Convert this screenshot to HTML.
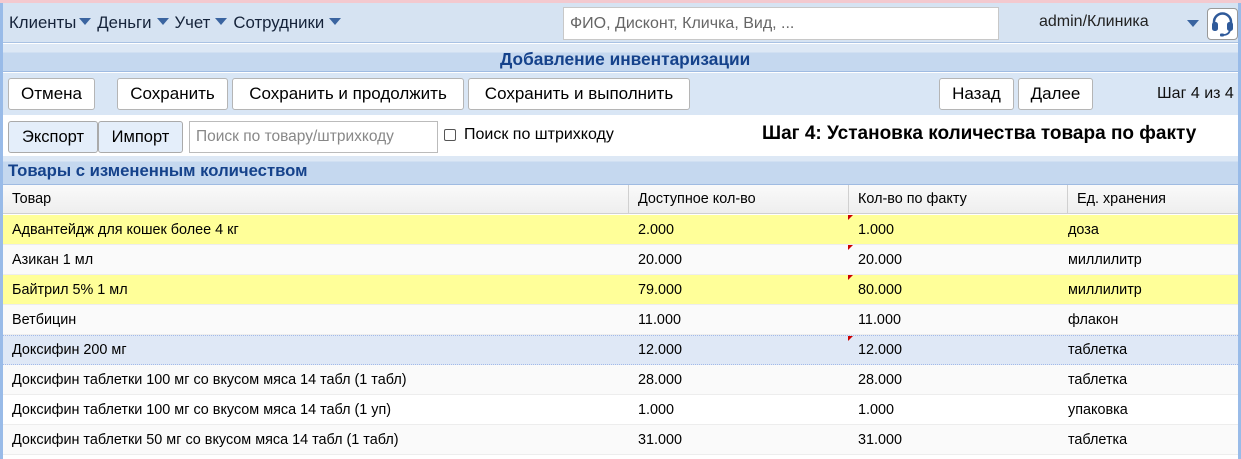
<!DOCTYPE html>
<html><head><meta charset="utf-8"><style>
*{margin:0;padding:0;box-sizing:border-box}
body{width:1241px;height:459px;overflow:hidden;background:#fff;font-family:"Liberation Sans",Arial,sans-serif;font-size:13px;color:#000;position:relative}
.a{position:absolute;white-space:nowrap}
.btn{position:absolute;height:32px;border:1px solid #b5b5b5;border-radius:3px;background:#fff;font-size:17px;line-height:30px;text-align:center;white-space:nowrap}
.tri{display:inline-block;width:0;height:0;border-left:6px solid transparent;border-right:6px solid transparent;border-top:7px solid #3a64a0;margin:0 6px 0 5px;vertical-align:3px}
.row{position:absolute;left:3px;width:1235px;height:30px;border-bottom:1px solid #ededed;font-size:14.4px;line-height:31px;white-space:nowrap}
.row span{position:absolute}
.c1{left:9px}.c2{left:635px}.c3{left:855px}.c4{left:1065px}
.mk{position:absolute;left:845px;top:0;width:0;height:0;border-top:5px solid #c00;border-right:5px solid transparent}
</style></head><body>
<div class="a" style="left:0;top:0;width:1241px;height:3px;background:#f3c9cf"></div>
<div class="a" style="left:0;top:3px;width:3px;height:456px;background:#99bbe8"></div>
<div class="a" style="right:0;top:3px;width:3px;height:456px;background:#99bbe8"></div>
<div class="a" style="left:3px;top:3px;width:1235px;height:40px;background:#d6e3f2;border-bottom:1px solid #a9c2e3"></div>
<div class="a" style="left:9px;top:13px;font-size:16.8px;color:#15233a">Клиенты<span class="tri" style="margin-left:3px"></span>Деньги<span class="tri"></span>Учет<span class="tri"></span>Сотрудники<span class="tri"></span></div>
<div class="a" style="left:563px;top:7px;width:436px;height:33px;background:#fff;border:1px solid #c8c8c8;font-size:16px;color:#666;padding-left:6px;line-height:31px">ФИО, Дисконт, Кличка, Вид, ...</div>
<div class="a" style="left:1039px;top:13px;font-size:16px;color:#222">admin/Клиника</div>
<div class="a" style="left:1187px;top:20px;border-left:6px solid transparent;border-right:6px solid transparent;border-top:7px solid #3a64a0"></div>
<div class="a" style="left:1207px;top:8px;width:31px;height:32px;background:#fff;border:1px solid #999;border-radius:4px">
<svg width="29" height="30" viewBox="0 0 29 30"><path d="M6 16 V13 A8.5 8.5 0 0 1 23 13 V16" fill="none" stroke="#2f5a9a" stroke-width="2.5"/><rect x="4" y="13" width="6" height="9" rx="2.5" fill="#2f5a9a"/><rect x="19" y="13" width="6" height="9" rx="2.5" fill="#2f5a9a"/><path d="M22 21 Q21 26 15 26" fill="none" stroke="#2f5a9a" stroke-width="1.8"/><rect x="12" y="24.5" width="4" height="3" rx="1" fill="#2f5a9a"/></svg></div>
<div class="a" style="left:3px;top:44px;width:1235px;height:28px;background:linear-gradient(#dde8f5 0,#dde8f5 8px,#c5d8ef 9px,#c5d8ef);border-bottom:1px solid #9fbbe2"></div>
<div class="a" style="left:500px;top:47px;font-weight:bold;font-size:17.3px;color:#15428b;line-height:24px">Добавление инвентаризации</div>
<div class="a" style="left:3px;top:73px;width:1235px;height:42px;background:#d9e6f5"></div>
<div class="btn" style="left:8px;top:78px;width:87px">Отмена</div>
<div class="btn" style="left:117px;top:78px;width:111px">Сохранить</div>
<div class="btn" style="left:232px;top:78px;width:232px">Сохранить и продолжить</div>
<div class="btn" style="left:468px;top:78px;width:222px">Сохранить и выполнить</div>
<div class="btn" style="left:939px;top:78px;width:75px">Назад</div>
<div class="btn" style="left:1018px;top:78px;width:75px">Далее</div>
<div class="a" style="left:1157px;top:85px;font-size:16px;color:#111">Шаг 4 из 4</div>
<div class="a" style="left:3px;top:115px;width:1235px;height:41px;background:#fff"></div>
<div class="btn" style="left:8px;top:121px;width:90px;background:#e4eefa;font-size:16.5px;border-color:#aaa">Экспорт</div>
<div class="btn" style="left:98px;top:121px;width:85px;background:#e4eefa;font-size:16.5px;border-color:#aaa">Импорт</div>
<div class="a" style="left:189px;top:121px;width:249px;height:32px;border:1px solid #bbb;font-size:15.5px;color:#888;padding-left:6px;line-height:30px;overflow:hidden">Поиск по товару/штрихкоду</div>
<div class="a" style="left:444px;top:129px;width:12px;height:12px;border:1px solid #555;border-radius:2px;background:#fff"></div>
<div class="a" style="left:464px;top:126px;font-size:16px">Поиск по штрихкоду</div>
<div class="a" style="left:762px;top:123px;font-size:19px;font-weight:bold">Шаг 4: Установка количества товара по факту</div>
<div class="a" style="left:3px;top:156px;width:1235px;height:29px;background:linear-gradient(#dde8f5 0,#dde8f5 5px,#c5d8ef 6px,#c5d8ef);border-bottom:1px solid #9fbbe2"></div>
<div class="a" style="left:8px;top:161px;font-size:16.7px;font-weight:bold;color:#15428b">Товары с измененным количеством</div>
<div class="a" style="left:3px;top:185px;width:1235px;height:29px;background:linear-gradient(#fafafa,#eeeeee);border-bottom:1px solid #d0d0d0;font-size:14.4px;line-height:28px">
<span class="a" style="left:9px">Товар</span>
<span class="a" style="left:625px;top:0;height:28px;border-left:1px solid #d0d0d0"></span>
<span class="a" style="left:635px">Доступное кол-во</span>
<span class="a" style="left:845px;top:0;height:28px;border-left:1px solid #d0d0d0"></span>
<span class="a" style="left:855px">Кол-во по факту</span>
<span class="a" style="left:1064px;top:0;height:28px;border-left:1px solid #d0d0d0"></span>
<span class="a" style="left:1074px">Ед. хранения</span>
</div>
<div class="row" style="top:215px;background:#ffff99"><span class="c1">Адвантейдж для кошек более 4 кг</span><span class="c2">2.000</span><i class="mk"></i><span class="c3">1.000</span><span class="c4">доза</span></div>
<div class="row" style="top:245px;background:#fafafa"><span class="c1">Азикан 1 мл</span><span class="c2">20.000</span><i class="mk"></i><span class="c3">20.000</span><span class="c4">миллилитр</span></div>
<div class="row" style="top:275px;background:#ffff99"><span class="c1">Байтрил 5% 1 мл</span><span class="c2">79.000</span><i class="mk"></i><span class="c3">80.000</span><span class="c4">миллилитр</span></div>
<div class="row" style="top:305px;background:#fafafa"><span class="c1">Ветбицин</span><span class="c2">11.000</span><span class="c3">11.000</span><span class="c4">флакон</span></div>
<div class="row" style="top:335px;background:#dfe8f6;border-top:1px dotted #a3bae9;border-bottom:1px dotted #a3bae9;line-height:29px"><span class="c1">Доксифин 200 мг</span><span class="c2">12.000</span><i class="mk"></i><span class="c3">12.000</span><span class="c4">таблетка</span></div>
<div class="row" style="top:365px;background:#fafafa"><span class="c1">Доксифин таблетки 100 мг со вкусом мяса 14 табл (1 табл)</span><span class="c2">28.000</span><span class="c3">28.000</span><span class="c4">таблетка</span></div>
<div class="row" style="top:395px;background:#fff"><span class="c1">Доксифин таблетки 100 мг со вкусом мяса 14 табл (1 уп)</span><span class="c2">1.000</span><span class="c3">1.000</span><span class="c4">упаковка</span></div>
<div class="row" style="top:425px;background:#fafafa"><span class="c1">Доксифин таблетки 50 мг со вкусом мяса 14 табл (1 табл)</span><span class="c2">31.000</span><span class="c3">31.000</span><span class="c4">таблетка</span></div>
</body></html>
